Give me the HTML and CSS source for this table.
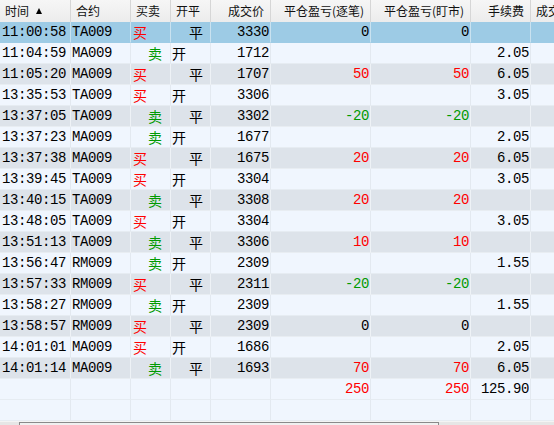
FILE: index.html
```html
<!DOCTYPE html>
<html>
<head>
<meta charset="utf-8">
<link rel="stylesheet" href="styles.css">
</head>
<body>
<div class="grid">
  <div class="row head">
    <div class="c l">时间 <span class="tri"></span></div>
    <div class="c l">合约</div>
    <div class="c l">买卖</div>
    <div class="c l">开平</div>
    <div class="c r">成交价</div>
    <div class="c r">平仓盈亏(逐笔)</div>
    <div class="c r">平仓盈亏(盯市)</div>
    <div class="c r">手续费</div>
    <div class="c l">成交编号</div>
  </div>
  <div class="row sel">
    <div class="c t">11:00:58</div><div class="c k">TA009</div><div class="c bs"><span class="buy">买</span></div><div class="c oc"><span class="cl">平</span></div><div class="c n">3330</div><div class="c n">0</div><div class="c n">0</div><div class="c n"></div><div class="c"></div>
  </div>
  <div class="row lt">
    <div class="c t">11:04:59</div><div class="c k">MA009</div><div class="c bs"><span class="sell">卖</span></div><div class="c oc"><span class="op">开</span></div><div class="c n">1712</div><div class="c n"></div><div class="c n"></div><div class="c n">2.05</div><div class="c"></div>
  </div>
  <div class="row dk">
    <div class="c t">11:05:20</div><div class="c k">MA009</div><div class="c bs"><span class="buy">买</span></div><div class="c oc"><span class="cl">平</span></div><div class="c n">1707</div><div class="c n red">50</div><div class="c n red">50</div><div class="c n">6.05</div><div class="c"></div>
  </div>
  <div class="row lt">
    <div class="c t">13:35:53</div><div class="c k">TA009</div><div class="c bs"><span class="buy">买</span></div><div class="c oc"><span class="op">开</span></div><div class="c n">3306</div><div class="c n"></div><div class="c n"></div><div class="c n">3.05</div><div class="c"></div>
  </div>
  <div class="row dk">
    <div class="c t">13:37:05</div><div class="c k">TA009</div><div class="c bs"><span class="sell">卖</span></div><div class="c oc"><span class="cl">平</span></div><div class="c n">3302</div><div class="c n grn">-20</div><div class="c n grn">-20</div><div class="c n"></div><div class="c"></div>
  </div>
  <div class="row lt">
    <div class="c t">13:37:23</div><div class="c k">MA009</div><div class="c bs"><span class="sell">卖</span></div><div class="c oc"><span class="op">开</span></div><div class="c n">1677</div><div class="c n"></div><div class="c n"></div><div class="c n">2.05</div><div class="c"></div>
  </div>
  <div class="row dk">
    <div class="c t">13:37:38</div><div class="c k">MA009</div><div class="c bs"><span class="buy">买</span></div><div class="c oc"><span class="cl">平</span></div><div class="c n">1675</div><div class="c n red">20</div><div class="c n red">20</div><div class="c n">6.05</div><div class="c"></div>
  </div>
  <div class="row lt">
    <div class="c t">13:39:45</div><div class="c k">TA009</div><div class="c bs"><span class="buy">买</span></div><div class="c oc"><span class="op">开</span></div><div class="c n">3304</div><div class="c n"></div><div class="c n"></div><div class="c n">3.05</div><div class="c"></div>
  </div>
  <div class="row dk">
    <div class="c t">13:40:15</div><div class="c k">TA009</div><div class="c bs"><span class="sell">卖</span></div><div class="c oc"><span class="cl">平</span></div><div class="c n">3308</div><div class="c n red">20</div><div class="c n red">20</div><div class="c n"></div><div class="c"></div>
  </div>
  <div class="row lt">
    <div class="c t">13:48:05</div><div class="c k">TA009</div><div class="c bs"><span class="buy">买</span></div><div class="c oc"><span class="op">开</span></div><div class="c n">3304</div><div class="c n"></div><div class="c n"></div><div class="c n">3.05</div><div class="c"></div>
  </div>
  <div class="row dk">
    <div class="c t">13:51:13</div><div class="c k">TA009</div><div class="c bs"><span class="sell">卖</span></div><div class="c oc"><span class="cl">平</span></div><div class="c n">3306</div><div class="c n red">10</div><div class="c n red">10</div><div class="c n"></div><div class="c"></div>
  </div>
  <div class="row lt">
    <div class="c t">13:56:47</div><div class="c k">RM009</div><div class="c bs"><span class="sell">卖</span></div><div class="c oc"><span class="op">开</span></div><div class="c n">2309</div><div class="c n"></div><div class="c n"></div><div class="c n">1.55</div><div class="c"></div>
  </div>
  <div class="row dk">
    <div class="c t">13:57:33</div><div class="c k">RM009</div><div class="c bs"><span class="buy">买</span></div><div class="c oc"><span class="cl">平</span></div><div class="c n">2311</div><div class="c n grn">-20</div><div class="c n grn">-20</div><div class="c n"></div><div class="c"></div>
  </div>
  <div class="row lt">
    <div class="c t">13:58:27</div><div class="c k">RM009</div><div class="c bs"><span class="sell">卖</span></div><div class="c oc"><span class="op">开</span></div><div class="c n">2309</div><div class="c n"></div><div class="c n"></div><div class="c n">1.55</div><div class="c"></div>
  </div>
  <div class="row dk">
    <div class="c t">13:58:57</div><div class="c k">RM009</div><div class="c bs"><span class="buy">买</span></div><div class="c oc"><span class="cl">平</span></div><div class="c n">2309</div><div class="c n">0</div><div class="c n">0</div><div class="c n"></div><div class="c"></div>
  </div>
  <div class="row lt">
    <div class="c t">14:01:01</div><div class="c k">MA009</div><div class="c bs"><span class="buy">买</span></div><div class="c oc"><span class="op">开</span></div><div class="c n">1686</div><div class="c n"></div><div class="c n"></div><div class="c n">2.05</div><div class="c"></div>
  </div>
  <div class="row dk">
    <div class="c t">14:01:14</div><div class="c k">MA009</div><div class="c bs"><span class="sell">卖</span></div><div class="c oc"><span class="cl">平</span></div><div class="c n">1693</div><div class="c n red">70</div><div class="c n red">70</div><div class="c n">6.05</div><div class="c"></div>
  </div>
  <div class="row lt">
    <div class="c t"></div><div class="c k"></div><div class="c bs"></div><div class="c oc"></div><div class="c n"></div><div class="c n red">250</div><div class="c n red">250</div><div class="c n">125.90</div><div class="c"></div>
  </div>
  <div class="row lt">
    <div class="c t"></div><div class="c k"></div><div class="c bs"></div><div class="c oc"></div><div class="c n"></div><div class="c n"></div><div class="c n"></div><div class="c n"></div><div class="c"></div>
  </div>
  <div class="hscroll"><div class="thumb"></div></div>
</div>
</body>
</html>
```
FILE: styles.css
```css
html, body {
  margin: 0;
  padding: 0;
  background: #f0f6fe;
  overflow: hidden;
}
.grid {
  width: 554px;
  height: 425px;
  overflow: hidden;
  position: relative;
  background: #f0f6fe;
}
.row {
  display: grid;
  grid-template-columns: 71px 60px 40px 40px 60px 100px 100px 60px 80px;
  height: 21px;
  width: 611px;
}
.c {
  box-sizing: border-box;
  height: 21px;
  border-right: 1px solid #e3e9f0;
  border-bottom: 1px solid #e6ecf2;
  white-space: nowrap;
  overflow: hidden;
  font-family: "Liberation Mono", monospace;
  font-size: 14px;
  letter-spacing: -0.4px;
  line-height: 20px;
  color: #000;
}
.row.head {
  height: 22px;
  background: linear-gradient(#f6f6f6, #ececec);
}
.row.head .c {
  height: 22px;
  border-bottom: none;
  border-right: 1px solid #d6d6d6;
  font-family: "Noto Sans CJK SC", "Noto Sans", sans-serif;
  font-size: 12px;
  letter-spacing: 0;
  line-height: 21px;
  color: #111;
}
.row.head .l { padding-left: 5px; }
.row.head .r { text-align: right; padding-right: 6px; }
.tri {
  display: inline-block;
  width: 0;
  height: 0;
  border-left: 3.5px solid transparent;
  border-right: 3.5px solid transparent;
  border-bottom: 6px solid #000;
  margin-left: 4px;
  vertical-align: 2px;
}
.row.sel { background: #9dcbe5; }
.row.sel .c { border-right-color: #c9e2f0; border-bottom-color: #9dcbe5; }
.row.lt { background: #f0f6fe; }
.row.dk { background: #dde3ea; }
.row.dk .c { border-right-color: #eef2f6; border-bottom-color: #e8edf2; }
.t { padding-left: 2px; }
.k { padding-left: 1px; }
.n { text-align: right; padding-right: 1px; }
.bs, .oc {
  font-family: "Noto Sans CJK SC", sans-serif;
  font-size: 14px;
  letter-spacing: 0;
  line-height: 20px;
}
.buy { color: #ff0000; padding-left: 2px; }
.sell { color: #009a00; padding-left: 17px; }
.op { padding-left: 1px; }
.cl { padding-left: 18px; }
.red { color: #ff0000; }
.grn { color: #009a00; }
.hscroll {
  position: absolute;
  left: 0;
  top: 421px;
  width: 554px;
  height: 4px;
  background: #e6e6e6;
  border-top: 1px solid #f4f4f4;
}
.thumb {
  position: absolute;
  left: 19px;
  top: 0;
  width: 418px;
  height: 6px;
  background: #f0f0f0;
  border-top: 1px solid #8a8a8a;
  border-left: 1px solid #8a8a8a;
  border-right: 1px solid #8a8a8a;
}
```
